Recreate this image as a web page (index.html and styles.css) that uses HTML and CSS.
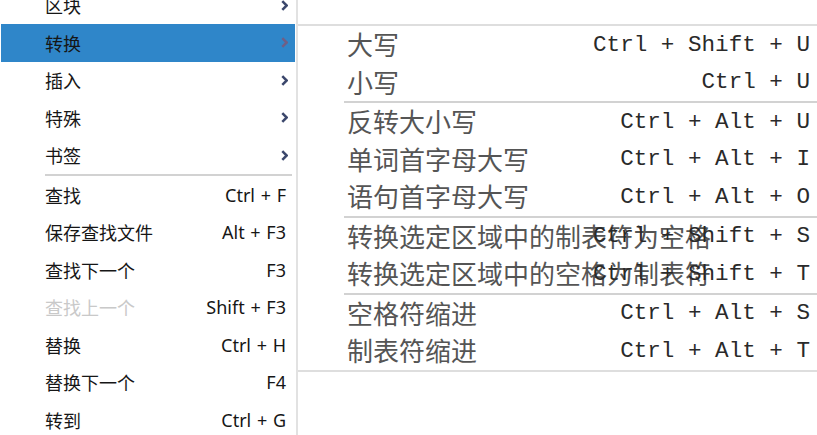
FILE: index.html
```html
<!DOCTYPE html>
<html>
  <head>
    <meta charset="UTF-8" />
    <title>Menu</title>
    <link rel="stylesheet" href="styles.css">
  </head>
  <body>
    <div class="screen">
      <ul class="menu">
        <li class="item"><span class="label">区块</span><svg class="arrow" viewBox="0 0 6 10"><path d="M1 1 L5 5 L1 9"/></svg></li>
        <li class="item active"><span class="label">转换</span><svg class="arrow" viewBox="0 0 6 10"><path d="M1 1 L5 5 L1 9"/></svg></li>
        <li class="item"><span class="label">插入</span><svg class="arrow" viewBox="0 0 6 10"><path d="M1 1 L5 5 L1 9"/></svg></li>
        <li class="item"><span class="label">特殊</span><svg class="arrow" viewBox="0 0 6 10"><path d="M1 1 L5 5 L1 9"/></svg></li>
        <li class="item"><span class="label">书签</span><svg class="arrow" viewBox="0 0 6 10"><path d="M1 1 L5 5 L1 9"/></svg></li>
        <li class="sep"></li>
        <li class="item"><span class="label">查找</span><span class="key">Ctrl + F</span></li>
        <li class="item"><span class="label">保存查找文件</span><span class="key">Alt + F3</span></li>
        <li class="item"><span class="label">查找下一个</span><span class="key">F3</span></li>
        <li class="item disabled"><span class="label">查找上一个</span><span class="key">Shift + F3</span></li>
        <li class="item"><span class="label">替换</span><span class="key">Ctrl + H</span></li>
        <li class="item"><span class="label">替换下一个</span><span class="key">F4</span></li>
        <li class="item"><span class="label">转到</span><span class="key">Ctrl + G</span></li>
      </ul>

      <ul class="submenu">
        <li class="sub-item"><span class="sub-label">大写</span><span class="sub-key">Ctrl + Shift + U</span></li>
        <li class="sub-item"><span class="sub-label">小写</span><span class="sub-key">Ctrl + U</span></li>
        <li class="sub-sep"></li>
        <li class="sub-item"><span class="sub-label">反转大小写</span><span class="sub-key">Ctrl + Alt + U</span></li>
        <li class="sub-item"><span class="sub-label">单词首字母大写</span><span class="sub-key">Ctrl + Alt + I</span></li>
        <li class="sub-item"><span class="sub-label">语句首字母大写</span><span class="sub-key">Ctrl + Alt + O</span></li>
        <li class="sub-sep"></li>
        <li class="sub-item"><span class="sub-label">转换选定区域中的制表符为空格</span><span class="sub-key">Ctrl + Shift + S</span></li>
        <li class="sub-item"><span class="sub-label">转换选定区域中的空格为制表符</span><span class="sub-key">Ctrl + Shift + T</span></li>
        <li class="sub-sep"></li>
        <li class="sub-item"><span class="sub-label">空格符缩进</span><span class="sub-key">Ctrl + Alt + S</span></li>
        <li class="sub-item"><span class="sub-label">制表符缩进</span><span class="sub-key">Ctrl + Alt + T</span></li>
      </ul>
    </div>
  </body>
</html>
```

FILE: styles.css
```css
* {
  box-sizing: border-box;
}

body {
  margin: 0;
  background: #fff;
  overflow: hidden;
}

ul {
  list-style: none;
  margin: 0;
  padding: 0;
}

.screen {
  display: flex;
  align-items: flex-start;
  width: 817px;
  height: 435px;
  overflow: hidden;
}

/* left menu */
.menu {
  flex: 0 0 298px;
  height: 449px;
  margin-top: -13.5px;
  padding-left: 1px;
  border-right: 2px solid #e2e2e2;
  font-family: "Noto Sans", "Noto Sans CJK SC", sans-serif;
  font-size: 18px;
  color: #161616;
}

.item {
  display: flex;
  align-items: center;
  justify-content: space-between;
  height: 37.5px;
  width: 294px;
  padding: 0 9px 0 44px;
}

.item.active {
  background: #2f86c9;
}

.item.disabled .label {
  color: #c9c9c9;
}

.key {
  white-space: pre;
  word-spacing: 1px;
}

.arrow {
  width: 7px;
  height: 11px;
  margin-right: -2px;
  fill: none;
  stroke: #3b476c;
  stroke-width: 2.3;
}

.item.active .arrow {
  stroke: #6f5f86;
}

.sep {
  height: 2px;
  margin: 0 4px 0 44px;
  background: #d2d2d2;
}

/* sub menu */
.submenu {
  flex: 1;
  margin-top: 24px;
  border-top: 2px solid #dedede;
  border-bottom: 2px solid #dedede;
  background: #fff;
}

.sub-item {
  display: grid;
  align-items: center;
  height: 37.5px;
  padding: 0 7px 0 49px;
}

.sub-label,
.sub-key {
  grid-area: 1 / 1;
  white-space: pre;
}

.sub-label {
  justify-self: start;
  font-family: "Noto Sans CJK SC", sans-serif;
  font-size: 26px;
  color: #555;
  margin-top: -2px;
}

.sub-key {
  justify-self: end;
  font-family: "Liberation Mono", monospace;
  font-size: 22.6px;
  color: #2a2a2a;
}

.sub-sep {
  height: 2px;
  margin-left: 46px;
  background: #d2d2d2;
}
```
